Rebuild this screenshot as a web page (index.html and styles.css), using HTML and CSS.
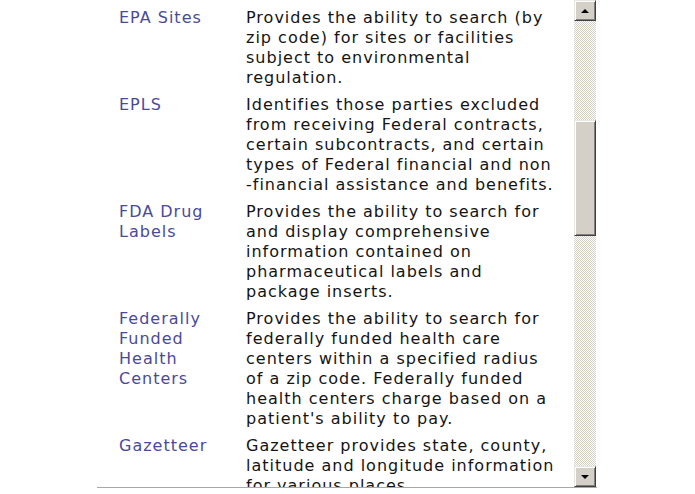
FILE: index.html
```html
<!DOCTYPE html>
<html>
<head>
<meta charset="utf-8">
<link rel="stylesheet" href="styles.css">
</head>
<body>
<div class="frame">
  <div class="viewport">
    <table class="list">
      <colgroup><col class="c-name"><col class="c-desc"></colgroup>
      <tr>
        <td class="name"><a href="#">EPA Sites</a></td>
        <td class="desc">Provides the ability to search (by zip code) for sites or facilities subject to environmental regulation.</td>
      </tr>
      <tr>
        <td class="name"><a href="#">EPLS</a></td>
        <td class="desc">Identifies those parties excluded from receiving Federal contracts, certain subcontracts, and certain types of Federal financial and non <span class="nowrap">-financial</span> assistance and benefits.</td>
      </tr>
      <tr>
        <td class="name"><a href="#">FDA Drug Labels</a></td>
        <td class="desc">Provides the ability to search for and display comprehensive information contained on pharmaceutical labels and package inserts.</td>
      </tr>
      <tr>
        <td class="name"><a href="#">Federally Funded Health Centers</a></td>
        <td class="desc">Provides the ability to search for federally funded health care centers within a specified radius of a zip code. Federally funded health centers charge based on a patient's ability to pay.</td>
      </tr>
      <tr>
        <td class="name"><a href="#">Gazetteer</a></td>
        <td class="desc">Gazetteer provides state, county, latitude and longitude information for various places.</td>
      </tr>
    </table>
  </div>
  <div class="scrollbar">
    <div class="sb-btn"><span class="arrow-up"></span></div>
    <div class="sb-track"><div class="sb-thumb"></div></div>
    <div class="sb-btn"><span class="arrow-down"></span></div>
  </div>
</div>
</body>
</html>
```
FILE: styles.css
```css
html, body {
  margin: 0;
  padding: 0;
  background: #ffffff;
}
.frame {
  display: flex;
  margin-left: 97px;
  width: 500px;
  height: 487px;
  border-bottom: 1px solid #a8a8a8;
  box-shadow: 0 1px 0 #e4e4e4;
  overflow: hidden;
}
.viewport {
  flex: 1;
  overflow: hidden;
  padding-top: 8px;
}
.list {
  border-collapse: collapse;
  table-layout: fixed;
  width: 461px;
  font-family: "DejaVu Sans", Verdana, sans-serif;
  font-size: 16px;
  letter-spacing: 1px;
  line-height: 20px;
  color: #141414;
}
.c-name { width: 149px; }
.c-desc { width: 312px; }
.list td {
  vertical-align: top;
  padding: 0 0 7px 0;
}
.name {
  padding-left: 22px !important;
}
.name a {
  color: #4a4a9a;
  text-decoration: none;
  display: block;
  width: 106px;
  letter-spacing: 1px;
}
.nowrap {
  white-space: nowrap;
}
.scrollbar {
  width: 22px;
  margin-right: 1px;
  display: flex;
  flex-direction: column;
}
.sb-btn {
  height: 21px;
  flex: none;
  box-sizing: border-box;
  background: #d4d0c8;
  border-top: 1px solid #e8e6e0;
  border-left: 1px solid #e8e6e0;
  border-right: 1px solid #404040;
  border-bottom: 1px solid #404040;
  box-shadow: inset 1px 1px 0 #ffffff, inset -1px -1px 0 #808080;
  display: flex;
  align-items: center;
  justify-content: center;
}
.arrow-up {
  width: 0;
  height: 0;
  border-left: 4px solid transparent;
  border-right: 4px solid transparent;
  border-bottom: 4px solid #000;
}
.arrow-down {
  width: 0;
  height: 0;
  border-left: 4px solid transparent;
  border-right: 4px solid transparent;
  border-top: 4px solid #000;
}
.sb-track {
  flex: 1;
  background: repeating-conic-gradient(#d4d0c8 0 25%, #ffffff 0 50%) 0 0 / 2px 2px;
  padding-top: 99px;
}
.sb-thumb {
  height: 116px;
  box-sizing: border-box;
  background: #d4d0c8;
  border-top: 1px solid #e8e6e0;
  border-left: 1px solid #e8e6e0;
  border-right: 1px solid #404040;
  border-bottom: 1px solid #404040;
  box-shadow: inset 1px 1px 0 #ffffff, inset -1px -1px 0 #808080;
}
```
